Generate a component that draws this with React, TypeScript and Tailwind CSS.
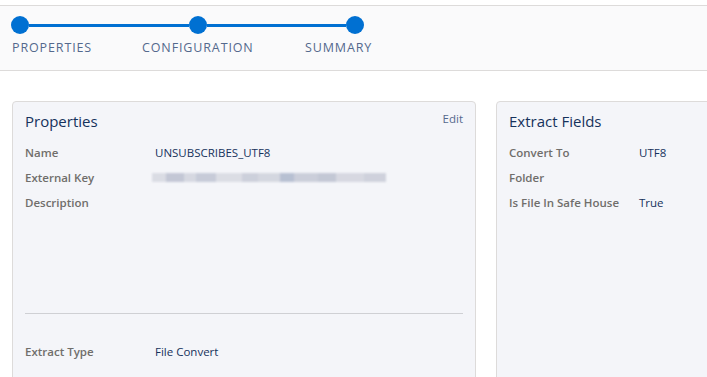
export default function App() {
  const font = { fontFamily: '"Open Sans", "Liberation Sans", sans-serif' };

  return (
    <div className="w-[707px] h-[377px] overflow-hidden bg-white" style={font}>
      {/* Stepper */}
      <div className="mt-[5px] h-[66px] border-y border-[#dddbda] bg-[#fafafb]">
        <div className="flex items-center pl-[11px] pt-[10px]">
          <div className="w-[18px] h-[18px] rounded-full bg-[#0070d2]" />
          <div className="w-[160px] h-[3px] bg-[#0070d2]" />
          <div className="w-[18px] h-[18px] rounded-full bg-[#0070d2]" />
          <div className="w-[139px] h-[3px] bg-[#0070d2]" />
          <div className="w-[18px] h-[18px] rounded-full bg-[#0070d2]" />
        </div>
        <div className="flex pl-[12px] mt-[4px] text-[12.5px] tracking-[0.07em] text-[#54698d] leading-[20px]">
          <span className="w-[130px]">PROPERTIES</span>
          <span className="w-[163px]">CONFIGURATION</span>
          <span>SUMMARY</span>
        </div>
      </div>

      {/* Cards */}
      <div className="flex gap-[20px] pl-[12px] pt-[30px]">
        <div className="w-[464px] h-[290px] shrink-0 rounded-[4px] border border-[#dddbda] bg-[#f4f5f9] px-[12px] pt-[8px]">
          <div className="flex justify-between">
            <h2 className="text-[15px] leading-[22px] text-[#16325c]">Properties</h2>
            <a className="text-[11.5px] leading-[14px] text-[#54698d] pt-[2px]">Edit</a>
          </div>
          <dl className="mt-[8px] text-[11.5px]">
            <Row label="Name" value="UNSUBSCRIBES_UTF8" />
            <div className="flex h-[25px] items-center">
              <dt className="w-[130px] font-semibold text-[#706e6b]">External Key</dt>
              <dd className="flex h-[9px] w-[234px] ml-[-3px] blur-[1px] opacity-80">
                <span className="w-[14px] bg-[#d4d6df]" />
                <span className="w-[18px] bg-[#b7bccd]" />
                <span className="w-[12px] bg-[#cfd2dc]" />
                <span className="w-[20px] bg-[#bcc1d1]" />
                <span className="w-[26px] bg-[#d6d8e0]" />
                <span className="w-[16px] bg-[#c3c7d4]" />
                <span className="w-[22px] bg-[#cdd0da]" />
                <span className="w-[14px] bg-[#a9b3c9]" />
                <span className="w-[24px] bg-[#c1c5d3]" />
                <span className="w-[18px] bg-[#b8bdcd]" />
                <span className="w-[28px] bg-[#d0d2dc]" />
                <span className="w-[22px] bg-[#c6c9d5]" />
              </dd>
            </div>
            <Row label="Description" value="" />
          </dl>
          <div className="mt-[98px] border-t border-[#cfd0d4]" />
          <div className="mt-[25px] text-[11.5px]">
            <Row label="Extract Type" value="File Convert" />
          </div>
        </div>

        <div className="w-[260px] h-[290px] shrink-0 rounded-[4px] border border-[#dddbda] bg-[#f4f5f9] px-[12px] pt-[8px]">
          <h2 className="text-[15px] leading-[22px] text-[#16325c]">Extract Fields</h2>
          <dl className="mt-[8px] text-[11.5px]">
            <Row label="Convert To" value="UTF8" />
            <Row label="Folder" value="" />
            <Row label="Is File In Safe House" value="True" />
          </dl>
        </div>
      </div>
    </div>
  );
}

function Row({ label, value }: { label: string; value: string }) {
  return (
    <div className="flex h-[25px] items-center">
      <dt className="w-[130px] font-semibold text-[#706e6b]">{label}</dt>
      <dd className="text-[#16325c]">{value}</dd>
    </div>
  );
}
